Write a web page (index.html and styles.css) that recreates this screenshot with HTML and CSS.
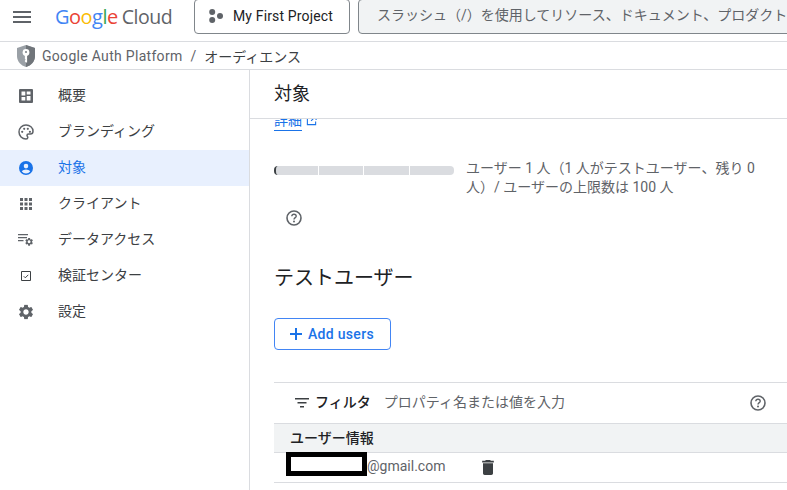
FILE: index.html
```html
<!DOCTYPE html>
<html lang="ja">
<head>
<meta charset="utf-8">
<title>Google Auth Platform</title>
<link rel="stylesheet" href="styles.css">
</head>
<body>
<header class="topbar">
  <svg class="menu" viewBox="0 0 18 12" width="18" height="12"><path d="M0 0h18v2H0zM0 5h18v2H0zM0 10h18v2H0z" fill="#5f6368"/></svg>
  <div class="logo"><span class="g-b">G</span><span class="g-r">o</span><span class="g-y">o</span><span class="g-b">g</span><span class="g-g">l</span><span class="g-r">e</span><span class="cloud">Cloud</span></div>
  <button class="project">
    <svg viewBox="0 0 14 14" width="14" height="14"><circle cx="3.200" cy="3" r="3" fill="#5f6368"/><circle cx="3.200" cy="11" r="3" fill="#5f6368"/><circle cx="11" cy="7" r="3" fill="#5f6368"/></svg>
    <span>My First Project</span>
  </button>
  <div class="search">スラッシュ（/）を使用してリソース、ドキュメント、プロダクト</div>
</header>
<div class="crumbs">
  <svg class="shield" viewBox="0 0 18 22" width="18" height="22"><path d="M9 0l9 3v8c0 5.500-3.800 9.500-9 11-5.200-1.500-9-5.500-9-11V3z" fill="#9aa0a6"/><path d="M9 0l9 3v8c0 5.500-3.800 9.500-9 11z" fill="#70757a"/><circle cx="9" cy="7.500" r="3.400" fill="#fff"/><circle cx="9" cy="7" r="1.100" fill="#80868b"/><path d="M7.900 10h2.200v7.500H9l-1.100-1v-1l.8-.7-.8-.8z" fill="#fff"/></svg>
  <span class="crumb-app">Google Auth Platform</span>
  <span class="crumb-sep">/</span>
  <span class="crumb-page">オーディエンス</span>
</div>
<div class="layout">
  <nav class="sidebar">
    <a class="nav-item">
      <svg viewBox="0 0 14 14" width="14" height="14"><path fill-rule="evenodd" d="M1 0h12a1 1 0 0 1 1 1v12a1 1 0 0 1-1 1H1a1 1 0 0 1-1-1V1a1 1 0 0 1 1-1zm1.500 2.500v4h3.800v-4zm5.200 0v3h3.800v-3zm0 4.500v4.500h3.800V7zM2.500 8v3.500h3.800V8z" fill="#5f6368"/></svg>
      <span>概要</span>
    </a>
    <a class="nav-item">
      <svg viewBox="0 0 16 16" width="16" height="16"><path fill="none" stroke="#5f6368" stroke-width="1.500" d="M8 1a7 7 0 1 0 0 14c1.300 0 1.800-.8 1.800-1.500 0-1-.8-1.300-.8-2.200 0-.8.700-1.300 1.500-1.300h1.800c1.700 0 2.700-1.300 2.700-2.800C15 3.700 11.900 1 8 1z"/><circle cx="4.200" cy="7.800" r="1.100" fill="#5f6368"/><circle cx="6.200" cy="4.800" r="1.100" fill="#5f6368"/><circle cx="9.800" cy="4.800" r="1.100" fill="#5f6368"/><circle cx="11.900" cy="7.800" r="1.100" fill="#5f6368"/></svg>
      <span>ブランディング</span>
    </a>
    <a class="nav-item active">
      <svg viewBox="0 0 14 14" width="14" height="14"><path fill-rule="evenodd" d="M7 0a7 7 0 1 1 0 14A7 7 0 0 1 7 0zm0 2.800a2.300 2.300 0 1 0 0 4.600 2.300 2.300 0 0 0 0-4.600zm0 5.800c-1.700 0-3.300.7-4.200 1.800a5.300 5.300 0 0 0 8.400 0C10.300 9.300 8.700 8.600 7 8.600z" fill="#1a73e8"/></svg>
      <span>対象</span>
    </a>
    <a class="nav-item">
      <svg viewBox="0 0 12 12" width="12" height="12"><path d="M0 0h3v3H0zM4.500 0h3v3h-3zM9 0h3v3H9zM0 4.500h3v3H0zM4.500 4.500h3v3h-3zM9 4.500h3v3H9zM0 9h3v3H0zM4.500 9h3v3h-3zM9 9h3v3H9z" fill="#5f6368"/></svg>
      <span>クライアント</span>
    </a>
    <a class="nav-item">
      <svg viewBox="0 0 16 14" width="16" height="14"><path d="M0 1h10v1.200H0zM0 4h9v1.200H0zM0 7h5.500v1.200H0z" fill="#5f6368"/><g transform="translate(6.300 4) scale(.4)"><path d="M19.140 12.940c.04-.3.06-.61.06-.94 0-.32-.02-.64-.07-.94l2.030-1.580c.18-.14.23-.41.12-.61l-1.920-3.320c-.12-.22-.37-.29-.59-.22l-2.390.96c-.5-.38-1.030-.7-1.620-.94l-.36-2.540c-.04-.24-.24-.41-.48-.41h-3.840c-.24 0-.43.17-.47.41l-.36 2.540c-.59.24-1.130.57-1.620.94l-2.390-.96c-.22-.08-.47 0-.59.22L2.740 8.870c-.12.21-.08.47.12.61l2.030 1.580c-.05.3-.09.63-.09.94s.02.64.07.94l-2.030 1.580c-.18.14-.23.41-.12.61l1.920 3.320c.12.22.37.29.59.22l2.390-.96c.5.38 1.030.7 1.620.94l.36 2.540c.05.24.24.41.48.41h3.840c.24 0 .44-.17.47-.41l.36-2.540c.59-.24 1.130-.56 1.620-.94l2.390.96c.22.08.47 0 .59-.22l1.920-3.320c.12-.22.07-.47-.12-.61l-2.010-1.580zM12 15.600c-1.980 0-3.600-1.620-3.600-3.600s1.620-3.600 3.600-3.600 3.600 1.620 3.600 3.600-1.620 3.600-3.600 3.600z" fill="#5f6368"/></g></svg>
      <span>データアクセス</span>
    </a>
    <a class="nav-item">
      <svg viewBox="0 0 10 10" width="10" height="10"><path fill="none" stroke="#3c4043" d="M.5 .5h9v9h-9z"/><path fill="none" stroke="#3c4043" d="M2.800 5.300l1.500 1.500 3-3"/></svg>
      <span>検証センター</span>
    </a>
    <a class="nav-item">
      <svg viewBox="2 2 20 20" width="15" height="15"><path d="M19.140 12.940c.04-.3.06-.61.06-.94 0-.32-.02-.64-.07-.94l2.030-1.580c.18-.14.23-.41.12-.61l-1.920-3.320c-.12-.22-.37-.29-.59-.22l-2.390.96c-.5-.38-1.030-.7-1.620-.94l-.36-2.540c-.04-.24-.24-.41-.48-.41h-3.840c-.24 0-.43.17-.47.41l-.36 2.540c-.59.24-1.130.57-1.620.94l-2.390-.96c-.22-.08-.47 0-.59.22L2.740 8.870c-.12.21-.08.47.12.61l2.030 1.580c-.05.3-.09.63-.09.94s.02.64.07.94l-2.030 1.580c-.18.14-.23.41-.12.61l1.920 3.320c.12.22.37.29.59.22l2.390-.96c.5.38 1.030.7 1.620.94l.36 2.540c.05.24.24.41.48.41h3.840c.24 0 .44-.17.47-.41l.36-2.540c.59-.24 1.130-.56 1.620-.94l2.390.96c.22.08.47 0 .59-.22l1.920-3.320c.12-.22.07-.47-.12-.61l-2.010-1.580zM12 15.600c-1.980 0-3.600-1.620-3.600-3.600s1.620-3.600 3.600-3.600 3.600 1.620 3.600 3.600-1.620 3.600-3.600 3.600z" fill="#5f6368"/></svg>
      <span>設定</span>
    </a>
  </nav>
  <main class="main">
    <div class="page-title">対象</div>
    <div class="scroll">
      <a class="more"><span class="more-text">詳細</span><svg viewBox="0 0 12 12" width="11" height="11"><path fill="none" stroke="#1a73e8" stroke-width="1.200" d="M5 1.500H1.500v9h9V7M6.500 1h4.500v4.500M11 1L5.500 6.500"/></svg></a>
      <div class="quota">
        <div class="bar"><span class="seg first"></span><span class="seg"></span><span class="seg"></span><span class="seg last"></span></div>
        <p class="quota-text">ユーザー 1 人（1 人がテストユーザー、残り 0 人）/ ユーザーの上限数は 100 人</p>
      </div>
      <svg class="help help-quota" viewBox="0 0 16 16" width="16" height="16"><circle cx="8" cy="8" r="7" fill="none" stroke="#5f6368" stroke-width="1.600"/><path d="M5.800 6.300A2.200 2.200 0 0 1 8 4.300c1.300 0 2.200.9 2.200 1.900 0 1.500-2.200 1.500-2.200 3.400" fill="none" stroke="#5f6368" stroke-width="1.400"/><circle cx="8" cy="11.600" r="1" fill="#5f6368"/></svg>
      <h2 class="section">テストユーザー</h2>
      <button class="add">
        <svg viewBox="0 0 12 12" width="12" height="12"><path d="M5 0h2v5h5v2H7v5H5V7H0V5h5z" fill="#1a73e8"/></svg>
        <span>Add users</span>
      </button>
      <div class="filter">
        <svg viewBox="0 0 14 10" width="14" height="10"><path d="M0 0h14v1.500H0zM2.500 4h9v1.500h-9zM5 8h4v1.500H5z" fill="#3c4043"/></svg>
        <span class="filter-label">フィルタ</span>
        <span class="filter-hint">プロパティ名または値を入力</span>
        <svg class="help filter-help" viewBox="0 0 16 16" width="16" height="16"><circle cx="8" cy="8" r="7" fill="none" stroke="#5f6368" stroke-width="1.600"/><path d="M5.800 6.300A2.200 2.200 0 0 1 8 4.300c1.300 0 2.200.9 2.200 1.900 0 1.500-2.200 1.500-2.200 3.400" fill="none" stroke="#5f6368" stroke-width="1.400"/><circle cx="8" cy="11.600" r="1" fill="#5f6368"/></svg>
      </div>
      <div class="thead">ユーザー情報</div>
      <div class="row">
        <span class="redact"></span>
        <span class="email">@gmail.com</span>
        <svg class="trash" viewBox="5 3 14 18" width="12" height="15"><path d="M6 19c0 1.100.9 2 2 2h8c1.100 0 2-.9 2-2V7H6v12zM19 4h-3.500l-1-1h-5l-1 1H5v2h14V4z" fill="#3c4043"/></svg>
      </div>
    </div>
  </main>
</div>
</body>
</html>
```
FILE: styles.css
```css
* { box-sizing: border-box; }
html, body { margin: 0; height: 490px; overflow: hidden; background: #fff; }
body { font-family: Roboto, "Noto Sans CJK JP", sans-serif; color: #202124; font-size: 14px; display: flex; flex-direction: column; width: 787px; }
svg { flex: none; display: block; }
.topbar { height: 42px; flex: none; display: flex; align-items: flex-start; border-bottom: 1px solid #dadce0; padding-left: 13px; white-space: nowrap; overflow: hidden; }
.menu { margin-top: 11px; }
.logo { margin-left: 24px; margin-top: 3px; font-family: "Open Sans", sans-serif; font-size: 20px; line-height: 28px; width: 139px; flex: none; letter-spacing: -.5px; }
.g-b { color: #4285f4; } .g-r { color: #ea4335; } .g-y { color: #fbbc04; } .g-g { color: #34a853; }
.cloud { color: #5f6368; margin-left: 4px; font-size: 19.500px; }
.project { height: 35px; width: 156px; margin-top: -1px; border: 1px solid #80868b; border-radius: 4px; background: #fff; display: flex; align-items: center; gap: 10px; padding: 0 0 2px 14px; font: 14px Roboto, sans-serif; letter-spacing: .15px; color: #202124; flex: none; }
.search { height: 35px; margin-top: -1px; margin-left: 8px; flex: none; width: 600px; border: 1px solid #80868b; border-radius: 4px 0 0 4px; background: #f1f3f4; color: #5f6368; padding-left: 18px; line-height: 31px; font-size: 14px; }
.crumbs { height: 28px; flex: none; display: flex; align-items: center; border-bottom: 1px solid #dadce0; padding-left: 17px; color: #5f6368; font-size: 14px; }
.crumb-app { margin-left: 7px; letter-spacing: .3px; }
.crumb-sep { margin: 0 8px; }
.crumb-page { color: #3c4043; }
.layout { flex: 1; display: flex; min-height: 0; }
.sidebar { width: 250px; flex: none; border-right: 1px solid #dadce0; padding-top: 8px; }
.nav-item { height: 36px; display: flex; align-items: center; color: #3c4043; position: relative; padding-left: 58px; line-height: 1; }
.nav-item svg { position: absolute; left: 26px; top: 50%; transform: translate(-50%, -50%); }
.nav-item span { position: relative; top: -1px; }
.nav-item.active { background: #e8f0fe; color: #1a73e8; }
.main { flex: 1; min-width: 0; display: flex; flex-direction: column; }
.page-title { height: 49px; flex: none; border-bottom: 1px solid #dadce0; padding-left: 24px; font-size: 18px; line-height: 47px; color: #202124; }
.scroll { flex: 1; overflow: hidden; padding-left: 24px; }
.more { display: flex; align-items: flex-start; gap: 4px; margin-top: -8px; height: 20px; color: #1a73e8; font-size: 14px; line-height: 19px; }
.more-text { border-bottom: 1px solid #1a73e8; height: 20px; }
.more svg { margin-top: 4px; }
.quota { display: flex; margin-top: 27px; gap: 12px; }
.bar { width: 180px; height: 9px; margin-top: 8px; display: flex; gap: 1px; flex: none; }
.seg { flex: 1 1 0; background: #dadce0; }
.seg.first { flex: 0 0 44px; border-left: 2px solid #3c4043; border-radius: 4px 0 0 4px; }
.seg.last { border-radius: 0 4px 4px 0; }
.quota-text { margin: 1px 0 0; width: 300px; color: #5f6368; font-size: 14px; line-height: 19px; }
.help-quota { margin: 13px 0 0 12px; }
.section { margin: 38px 0 0; font-size: 20px; font-weight: 400; line-height: 28px; color: #202124; }
.add { margin-top: 26px; width: 117px; height: 32px; display: flex; align-items: center; gap: 6px; padding: 0 0 0 15px; border: 1px solid #4285f4; border-radius: 4px; background: #fff; color: #1a73e8; font: 500 14px Roboto, sans-serif; letter-spacing: .3px; }
.filter { margin-top: 32px; height: 41px; display: flex; align-items: center; border-top: 1px solid #dadce0; padding-left: 21px; }
.filter-label { margin: 0 0 5px 6px; font-weight: 500; color: #202124; }
.filter-hint { margin: 0 0 5px 13px; color: #5f6368; }
.filter-help { margin-left: auto; margin-right: 21px; }
.thead { height: 30px; background: #f1f3f4; border-top: 1px solid #dadce0; border-bottom: 1px solid #dadce0; padding-left: 16px; line-height: 28px; font-weight: 500; color: #202124; }
.row { height: 30px; border-bottom: 1px solid #dadce0; display: flex; align-items: flex-start; padding-left: 12px; }
.redact { width: 81px; height: 24px; border: 5px solid #000; background: #fff; flex: none; margin-top: -1px; }
.email { color: #5f6368; line-height: 26px; }
.trash { margin-left: 37px; margin-top: 7px; }
```
